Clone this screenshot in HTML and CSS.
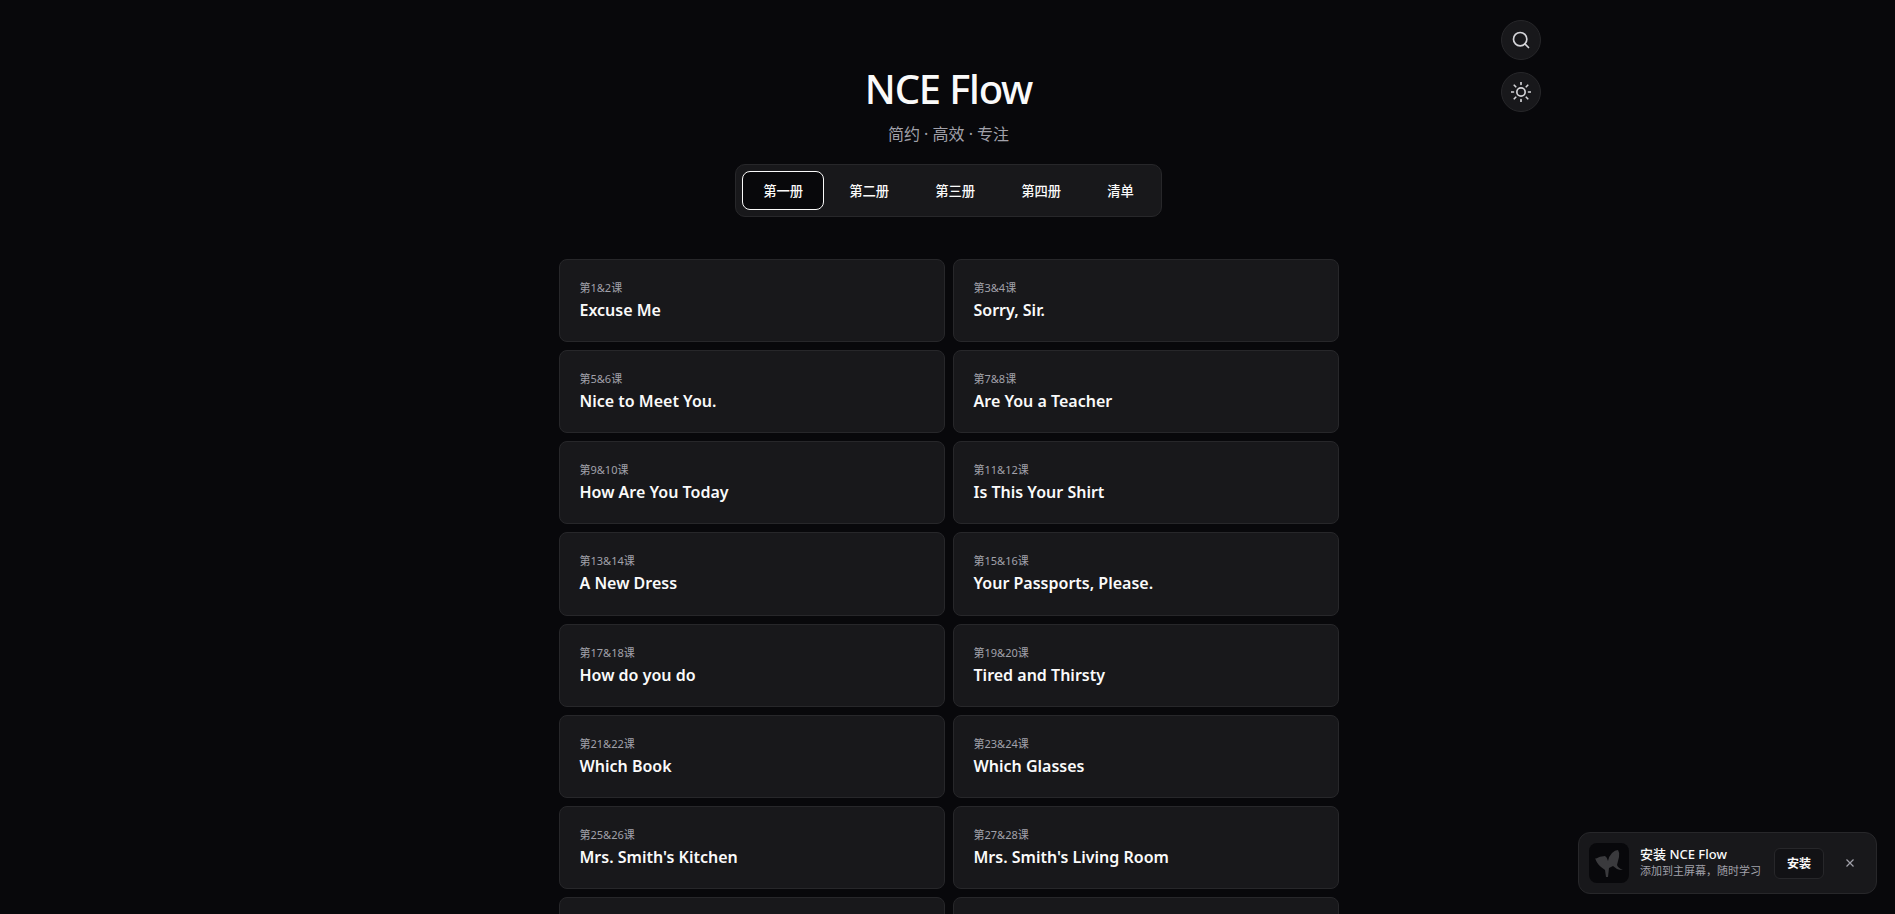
FILE: index.html
```html
<!DOCTYPE html>
<html lang="zh-CN">
<head>
	<meta charset="UTF-8">
	<title>NCE Flow</title>
	<link rel="stylesheet" href="styles.css">
</head>
<body>
	<div class="page">
		<div class="floatBtns">
			<button class="roundBtn">
				<svg viewBox="0 0 24 24" width="20" height="20"><circle cx="11" cy="11" r="8"/><path d="M21 21l-4.300-4.300"/></svg>
			</button>
			<button class="roundBtn">
				<svg viewBox="0 0 24 24" width="20" height="20"><circle cx="12" cy="12" r="5"/><path d="M12 .5V3M12 21v2.500M.5 12H3M21 12h2.500M3.900 3.900l1.800 1.800M18.300 18.300l1.800 1.800M3.900 20.100l1.800-1.800M18.300 5.700l1.800-1.800"/></svg>
			</button>
		</div>

		<header class="header">
			<h1 class="title">NCE Flow</h1>
			<div class="subtitle">简约 · 高效 · 专注</div>
			<nav class="tabs">
				<a class="tab active">第一册</a>
				<a class="tab">第二册</a>
				<a class="tab">第三册</a>
				<a class="tab">第四册</a>
				<a class="tab">清单</a>
			</nav>
		</header>

		<main class="lessons">
			<a class="card"><span class="num">第1&amp;2课</span><span class="name">Excuse Me</span></a>
			<a class="card"><span class="num">第3&amp;4课</span><span class="name">Sorry, Sir.</span></a>
			<a class="card"><span class="num">第5&amp;6课</span><span class="name">Nice to Meet You.</span></a>
			<a class="card"><span class="num">第7&amp;8课</span><span class="name">Are You a Teacher</span></a>
			<a class="card"><span class="num">第9&amp;10课</span><span class="name">How Are You Today</span></a>
			<a class="card"><span class="num">第11&amp;12课</span><span class="name">Is This Your Shirt</span></a>
			<a class="card"><span class="num">第13&amp;14课</span><span class="name">A New Dress</span></a>
			<a class="card"><span class="num">第15&amp;16课</span><span class="name">Your Passports, Please.</span></a>
			<a class="card"><span class="num">第17&amp;18课</span><span class="name">How do you do</span></a>
			<a class="card"><span class="num">第19&amp;20课</span><span class="name">Tired and Thirsty</span></a>
			<a class="card"><span class="num">第21&amp;22课</span><span class="name">Which Book</span></a>
			<a class="card"><span class="num">第23&amp;24课</span><span class="name">Which Glasses</span></a>
			<a class="card"><span class="num">第25&amp;26课</span><span class="name">Mrs. Smith's Kitchen</span></a>
			<a class="card"><span class="num">第27&amp;28课</span><span class="name">Mrs. Smith's Living Room</span></a>
			<a class="card"><span class="num">&nbsp;</span><span class="name">&nbsp;</span></a>
			<a class="card"><span class="num">&nbsp;</span><span class="name">&nbsp;</span></a>
		</main>

		<div class="install">
			<div class="installIcon">
				<svg viewBox="0 0 40 40" width="40" height="40"><path d="M6 16q5-3 10-3 2 1 3 5 1-5 4-8t6-3q2 3 1 7l-2 8q1 3 6 5-4 0-6-1l-4-3-4 2-1 9h-2l-1-7-4-3q-4-3-6-9z"/></svg>
			</div>
			<div class="installText">
				<div class="installTitle">安装 NCE Flow</div>
				<div class="installSub">添加到主屏幕，随时学习</div>
			</div>
			<button class="installBtn">安装</button>
			<button class="installClose">
				<svg viewBox="0 0 12 12" width="12" height="12"><path d="M2.500 2.500l7 7M9.500 2.500l-7 7"/></svg>
			</button>
		</div>
	</div>
</body>
</html>
```

FILE: styles.css
```css
html, body {
	width: 100%;
	height: 100%;
	margin: 0;
	padding: 0;
	overflow: hidden;
	background: #08080b;
}
body {
	font-family: "Noto Sans", "Noto Sans CJK SC", sans-serif;
	color: #fafafa;
}
a {
	display: block;
}
button {
	font-family: inherit;
	cursor: pointer;
	padding: 0;
}
.page {
	height: 100%;
	box-sizing: border-box;
	padding-left: 2px;
	overflow: hidden;
}
.floatBtns {
	position: absolute;
	top: 20px;
	left: 1501px;
	display: flex;
	flex-direction: column;
	gap: 12px;
}
.roundBtn {
	width: 40px;
	height: 40px;
	border-radius: 50%;
	background: #18181b;
	border: 1px solid #27272a;
	display: flex;
	align-items: center;
	justify-content: center;
}
.roundBtn svg {
	fill: none;
	stroke: #d4d4d8;
	stroke-width: 2;
	stroke-linecap: round;
}
.header {
	padding-top: 64px;
	display: flex;
	flex-direction: column;
	align-items: center;
}
.title {
	margin: 0;
	font-size: 40px;
	font-weight: 500;
	line-height: 50px;
	letter-spacing: -1.2px;
}
.subtitle {
	margin-top: 8px;
	font-size: 16px;
	line-height: 24px;
	color: #a1a1aa;
}
.tabs {
	margin-top: 18px;
	display: flex;
	gap: 4px;
	padding: 6px;
	background: #18181b;
	border: 1px solid #27272a;
	border-radius: 10px;
}
.tab {
	padding: 11px 20px 9px;
	font-size: 13.33px;
	line-height: 17px;
	font-weight: 500;
	border: 1px solid transparent;
	border-radius: 8px;
}
.tab.active {
	background: #08080b;
	border-color: #fafafa;
}
.lessons {
	width: 780px;
	margin: 42px auto 0;
	display: grid;
	grid-template-columns: 1fr 1fr;
	gap: 8px;
}
.card {
	height: 83.17px;
	box-sizing: border-box;
	padding: 20px;
	background: #18181b;
	border: 1px solid #27272a;
	border-radius: 8px;
}
.num {
	display: block;
	font-size: 11px;
	line-height: 15px;
	color: #a1a1aa;
	margin-bottom: 3px;
}
.name {
	display: block;
	font-size: 16px;
	line-height: 24px;
	font-weight: 600;
}
.install {
	position: absolute;
	left: 1578px;
	top: 832px;
	width: 299px;
	height: 62px;
	box-sizing: border-box;
	padding: 0 10px;
	display: flex;
	align-items: center;
	background: #18181b;
	border: 1px solid #27272a;
	border-radius: 12px;
}
.installIcon {
	width: 40px;
	height: 40px;
	border-radius: 8px;
	background: #08080b;
	flex: none;
}
.installIcon svg {
	fill: #3a3a3d;
	display: block;
}
.installText {
	margin-left: 11px;
	margin-top: -3px;
	flex: 1;
}
.installTitle {
	font-size: 13px;
	line-height: 18px;
	font-weight: 500;
}
.installSub {
	font-size: 11px;
	line-height: 15px;
	color: #a1a1aa;
}
.installBtn {
	width: 50px;
	height: 31px;
	background: #121215;
	border: 1px solid #27272a;
	border-radius: 6px;
	color: #fafafa;
	font-size: 12px;
	font-weight: 600;
}
.installClose {
	margin-left: 14px;
	margin-right: 4px;
	width: 24px;
	height: 24px;
	background: none;
	border: none;
	display: flex;
	align-items: center;
	justify-content: center;
}
.installClose svg {
	fill: none;
	stroke: #a1a1aa;
	stroke-width: 1.2;
}
```
